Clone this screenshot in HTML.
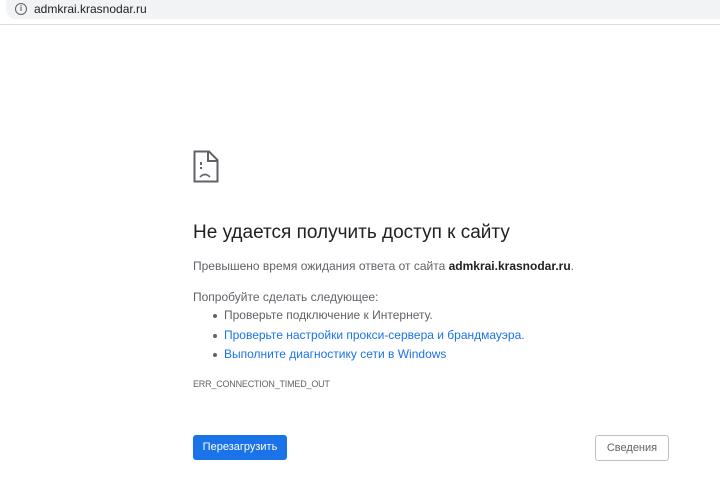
<!DOCTYPE html>
<html><head><meta charset="utf-8"><style>
*{margin:0;padding:0;box-sizing:border-box}
body{width:720px;height:500px;background:#fff;font-family:"Liberation Sans","DejaVu Sans",sans-serif;position:relative;overflow:hidden;color:#5f6368}
.bar{position:absolute;left:6px;top:0;width:720px;height:19px;background:#f1f3f4;border-radius:0 0 0 10px}
.url{position:absolute;left:34px;top:2px;font-size:12px;color:#202124}
.info{position:absolute;left:15px;top:3px;width:12px;height:12px;border:1.3px solid #5f6368;border-radius:50%;font-size:8px;line-height:10px;text-align:center;color:#5f6368;font-weight:bold}
.line{position:absolute;left:0;top:24px;width:720px;height:1px;background:#dadce0}
.a{position:absolute;left:193px}
h1{position:absolute;left:193px;top:222px;font-size:19px;font-weight:normal;color:#202124}
.t{font-size:12px;color:#5f6368}
.bl{color:#1a73e8}
.dot{position:absolute;left:213px;width:4px;height:4px;border-radius:50%;background:#5f6368}
.btn{position:absolute;top:435px;height:25px;border-radius:3px;font-size:11px;line-height:25px;text-align:center}
</style></head><body>
<div class="bar"></div>
<div class="info">i</div>
<div class="url">admkrai.krasnodar.ru</div>
<div class="line"></div>
<svg class="a" style="top:150px" width="26" height="33" viewBox="0 0 26 33">
<path d="M1.5 1.5H16L24.5 10V31.5H1.5Z" fill="none" stroke="#5f6368" stroke-width="2"/>
<path d="M15 1.5V11H24.5" fill="none" stroke="#5f6368" stroke-width="2"/>
<rect x="7" y="12" width="2" height="3" fill="#5f6368"/>
<rect x="7" y="17" width="2" height="2" fill="#5f6368"/>
<path d="M7 27Q12 22 17 27" fill="none" stroke="#5f6368" stroke-width="1.6"/>
</svg>
<h1>Не удается получить доступ к сайту</h1>
<div class="a t" style="top:259px">Превышено время ожидания ответа от сайта <b style="color:#202124">admkrai.krasnodar.ru</b>.</div>
<div class="a t" style="top:290px">Попробуйте сделать следующее:</div>
<div class="dot" style="top:314px"></div>
<div class="t" style="position:absolute;left:224px;top:308px">Проверьте подключение к Интернету.</div>
<div class="dot" style="top:334px"></div>
<div class="t bl" style="position:absolute;left:224px;top:328px">Проверьте настройки прокси-сервера и брандмауэра.</div>
<div class="dot" style="top:353px"></div>
<div class="t bl" style="position:absolute;left:224px;top:347px">Выполните диагностику сети в Windows</div>
<div class="a" style="top:379px;font-size:9px;letter-spacing:-0.2px;color:#5f6368">ERR_CONNECTION_TIMED_OUT</div>
<div class="btn" style="left:193px;width:94px;background:#1a73e8;color:#fff">Перезагрузить</div>
<div class="btn" style="left:595px;width:74px;height:26px;border:1px solid #bdc1c6;color:#5f6368;line-height:24px">Сведения</div>
</body></html>
